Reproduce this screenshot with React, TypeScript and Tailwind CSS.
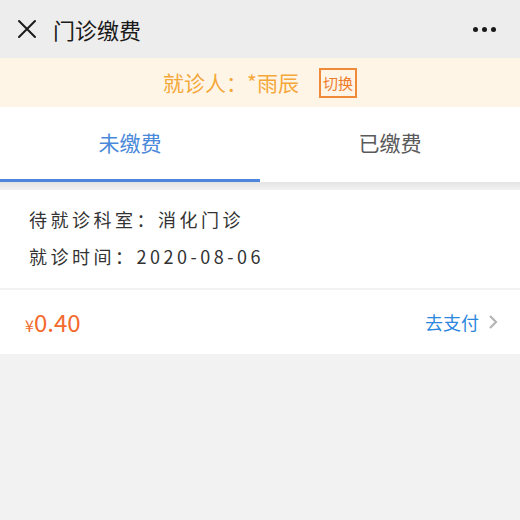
const font = "font-['Noto_Sans_CJK_SC','Noto_Sans',sans-serif]";

export default function App() {
  return (
    <div className={`min-h-[520px] w-[520px] bg-[#f2f2f2] ${font}`}>
      <header className="flex h-[58px] items-center bg-[#ededed] pl-[17px] pr-[24px]">
        <svg width="20" height="20" viewBox="0 0 20 20" className="shrink-0">
          <path d="M2 2L18 18M18 2L2 18" stroke="#1a1a1a" strokeWidth="2" strokeLinecap="round" />
        </svg>
        <h1 className="ml-[16px] text-[22px] leading-none text-[#1a1a1a]">门诊缴费</h1>
        <div className="ml-auto flex gap-[4px]">
          <span className="h-[5px] w-[5px] rounded-full bg-[#1a1a1a]" />
          <span className="h-[5px] w-[5px] rounded-full bg-[#1a1a1a]" />
          <span className="h-[5px] w-[5px] rounded-full bg-[#1a1a1a]" />
        </div>
      </header>

      <div className="flex h-[49px] items-center justify-center bg-[#fef5e7]">
        <span className="text-[21px] leading-none text-[#f5a83a]">就诊人：*雨辰</span>
        <span className="ml-[20px] flex h-[30px] items-center border-2 border-[#ef8a3a] px-[2px] text-[15px] leading-none text-[#ee7c2c]">
          切换
        </span>
      </div>

      <div className="flex h-[75px] bg-white">
        <div className="flex flex-1 flex-col">
          <div className="flex flex-1 items-center justify-center text-[21px] text-[#4a88d9]">未缴费</div>
          <div className="h-[3px] bg-[#4e86dc]" />
        </div>
        <div className="flex flex-1 flex-col">
          <div className="flex flex-1 items-center justify-center text-[21px] text-[#5a5a5a]">已缴费</div>
          <div className="h-[3px] bg-white" />
        </div>
      </div>
      <div className="h-[8px] bg-gradient-to-b from-[#e4e4e4] to-[#f2f2f2]" />

      <div className="bg-white">
        <div className="flex flex-col gap-[15px] border-b-2 border-[#f3f3f3] px-[29px] pb-[21px] pt-[18px] text-[18px] leading-[22px] tracking-[3.5px] text-[#333]">
          <div>待就诊科室：消化门诊</div>
          <div>就诊时间：2020-08-06</div>
        </div>
        <div className="flex h-[64px] items-center pl-[25px] pr-[22px]">
          <span className="text-[#f26a2c]">
            <span className="text-[16px]">¥</span>
            <span className="text-[24px]">0.40</span>
          </span>
          <span className="ml-auto text-[18px] text-[#2b87de]">去支付</span>
          <svg width="10" height="16" viewBox="0 0 10 16" className="ml-[9px]">
            <path d="M2 2L8 8L2 14" fill="none" stroke="#b5b5b5" strokeWidth="2.2" />
          </svg>
        </div>
      </div>
    </div>
  );
}
